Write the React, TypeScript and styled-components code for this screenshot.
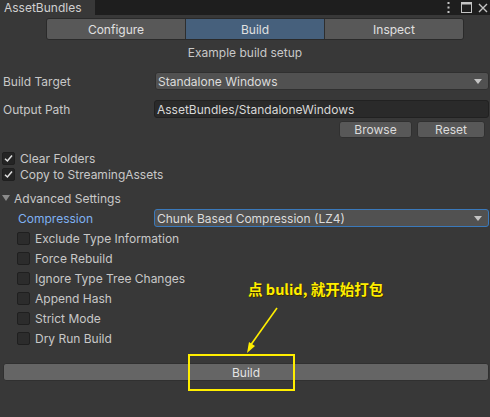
import React from "react";
import styled, { createGlobalStyle } from "styled-components";

const Global = createGlobalStyle`
  html, body { margin: 0; padding: 0; background: #383838; }
  body { font-family: Inter, "Noto Sans", sans-serif; }
  * { box-sizing: border-box; }
`;

const Window = styled.div`
  position: relative;
  width: 490px;
  height: 417px;
  background: #383838;
  color: #c8c8c8;
  font-size: 12px;
  overflow: hidden;
  display: flex;
  flex-direction: column;
`;

const Header = styled.div`
  height: 15px;
  background: #1e1e1e;
  display: flex;
  align-items: stretch;
`;

const Tab = styled.div`
  width: 95px;
  background: #383838;
  color: #d0d0d0;
  font-size: 12px;
  line-height: 15px;
  padding-left: 4px;
`;

const HeaderIcons = styled.div`
  margin-left: auto;
  display: flex;
  align-items: center;
  gap: 6px;
  padding-right: 2px;
`;

const Toolbar = styled.div`
  margin: 3px 0 0 46px;
  display: flex;
  width: 418px;
  height: 22px;
  border-radius: 3px;
  overflow: hidden;
  border: 1px solid #2a2a2a;
`;

const ToolButton = styled.div<{ $active?: boolean }>`
  flex: 1;
  background: ${(p) => (p.$active ? "#46607c" : "#585858")};
  color: #e0e0e0;
  display: flex;
  align-items: center;
  justify-content: center;
  font-size: 12px;
  & + & { border-left: 1px solid #2e2e2e; }
`;

const Subtitle = styled.div`
  height: 18px;
  margin-top: 4px;
  text-align: center;
  line-height: 18px;
`;

const FieldRow = styled.div<{ $mt: number }>`
  margin-top: ${(p) => p.$mt}px;
  height: 18px;
  display: flex;
  align-items: center;
`;

const Label = styled.div<{ $indent?: number; $blue?: boolean }>`
  width: 154px;
  padding-left: ${(p) => p.$indent ?? 3}px;
  color: ${(p) => (p.$blue ? "#7fb1f2" : "#c8c8c8")};
`;

const Dropdown = styled.div<{ $focus?: boolean }>`
  flex: 1;
  margin-right: 1px;
  height: 18px;
  background: #515151;
  border: 1px solid ${(p) => (p.$focus ? "#3a79bb" : "#303030")};
  border-radius: 3px;
  display: flex;
  align-items: center;
  padding: 0 6px 0 2px;
  color: #dcdcdc;
  margin-left: ${(p) => (p.$focus ? "0" : "1px")};
`;

const Caret = styled.span`
  margin-left: auto;
  width: 0;
  height: 0;
  border-left: 4px solid transparent;
  border-right: 4px solid transparent;
  border-top: 5px solid #c4c4c4;
`;

const TextField = styled.div`
  flex: 1;
  margin-right: 1px;
  height: 18px;
  background: #2a2a2a;
  border: 1px solid #212121;
  border-radius: 3px;
  display: flex;
  align-items: center;
  padding-left: 2px;
  color: #d8d8d8;
`;

const ButtonRow = styled.div`
  margin-top: 3px;
  height: 17px;
  display: flex;
  justify-content: flex-end;
  gap: 5px;
  padding-right: 5px;
`;

const SmallButton = styled.div<{ $w: number }>`
  width: ${(p) => p.$w}px;
  background: #585858;
  border: 1px solid #303030;
  border-radius: 3px;
  display: flex;
  align-items: center;
  justify-content: center;
  color: #dcdcdc;
`;

const CheckRow = styled.div<{ $mt?: number; $h: number; $indent: number }>`
  margin-top: ${(p) => p.$mt ?? 0}px;
  height: ${(p) => p.$h}px;
  display: flex;
  align-items: center;
  padding-left: ${(p) => p.$indent}px;
  gap: 5px;
`;

const Box = styled.div<{ $checked?: boolean }>`
  width: 13px;
  height: 13px;
  border-radius: 2px;
  background: ${(p) => (p.$checked ? "#242424" : "#2c2c2c")};
  border: 1px solid #1f1f1f;
  display: flex;
  align-items: center;
  justify-content: center;
`;

const Foldout = styled.div`
  margin-top: 7px;
  height: 18px;
  display: flex;
  align-items: center;
  padding-left: 2px;
  gap: 4px;
`;

const Triangle = styled.span`
  width: 0;
  height: 0;
  border-left: 4px solid transparent;
  border-right: 4px solid transparent;
  border-top: 6px solid #8a8a8a;
`;

const BigButton = styled.div`
  margin: 15px 1px 0 3px;
  height: 18px;
  background: #656565;
  border: 1px solid #303030;
  border-radius: 3px;
  display: flex;
  align-items: center;
  justify-content: center;
  color: #e4e4e4;
`;

const Note = styled.div`
  position: absolute;
  left: 248px;
  top: 278px;
  font-family: "Noto Sans CJK SC", "Noto Sans", sans-serif;
  font-weight: 700;
  font-size: 14.5px;
  color: #ffee00;
  text-shadow: 1px 1px 0 #3a2a00;
  white-space: nowrap;
`;

const Highlight = styled.div`
  position: absolute;
  left: 188px;
  top: 354px;
  width: 107px;
  height: 37px;
  border: 2px solid #ffee00;
`;

const ArrowSvg = styled.svg`
  position: absolute;
  left: 240px;
  top: 300px;
`;

const Check = () => (
  <svg width="9" height="9" viewBox="0 0 9 9">
    <path d="M1 4.8 L3.4 7 L8 1.6" fill="none" stroke="#e0e0e0" strokeWidth="1.5" />
  </svg>
);

const advanced = [
  "Exclude Type Information",
  "Force Rebuild",
  "Ignore Type Tree Changes",
  "Append Hash",
  "Strict Mode",
  "Dry Run Build",
];

export default function App() {
  return (
    <Window>
      <Global />
      <Header>
        <Tab>AssetBundles</Tab>
        <HeaderIcons>
          <svg width="3" height="11" viewBox="0 0 3 11">
            <rect x="0.5" y="0" width="2" height="2" fill="#c4c4c4" />
            <rect x="0.5" y="4.5" width="2" height="2" fill="#c4c4c4" />
            <rect x="0.5" y="9" width="2" height="2" fill="#c4c4c4" />
          </svg>
          <svg width="11" height="11" viewBox="0 0 11 11" style={{ marginLeft: 5 }}>
            <rect x="0.5" y="0.5" width="10" height="10" fill="none" stroke="#c4c4c4" />
            <rect x="0.5" y="0.5" width="10" height="2" fill="#c4c4c4" />
          </svg>
          <svg width="10" height="10" viewBox="0 0 10 10">
            <path d="M1 1 L9 9 M9 1 L1 9" stroke="#c4c4c4" strokeWidth="1.4" />
          </svg>
        </HeaderIcons>
      </Header>
      <Toolbar>
        <ToolButton>Configure</ToolButton>
        <ToolButton $active>Build</ToolButton>
        <ToolButton>Inspect</ToolButton>
      </Toolbar>
      <Subtitle>Example build setup</Subtitle>
      <FieldRow $mt={10}>
        <Label>Build Target</Label>
        <Dropdown>
          Standalone Windows
          <Caret />
        </Dropdown>
      </FieldRow>
      <FieldRow $mt={10}>
        <Label>Output Path</Label>
        <TextField>AssetBundles/StandaloneWindows</TextField>
      </FieldRow>
      <ButtonRow>
        <SmallButton $w={73}>Browse</SmallButton>
        <SmallButton $w={68}>Reset</SmallButton>
      </ButtonRow>
      <CheckRow $mt={12} $h={16} $indent={2}>
        <Box $checked>
          <Check />
        </Box>
        Clear Folders
      </CheckRow>
      <CheckRow $h={16} $indent={2}>
        <Box $checked>
          <Check />
        </Box>
        Copy to StreamingAssets
      </CheckRow>
      <Foldout>
        <Triangle />
        Advanced Settings
      </Foldout>
      <FieldRow $mt={2}>
        <Label $indent={18} $blue>
          Compression
        </Label>
        <Dropdown $focus>
          Chunk Based Compression (LZ4)
          <Caret />
        </Dropdown>
      </FieldRow>
      {advanced.map((t, i) => (
        <CheckRow key={t} $mt={i === 0 ? 1 : 0} $h={20} $indent={17}>
          <Box />
          {t}
        </CheckRow>
      ))}
      <BigButton>Build</BigButton>
      <Note>点 bulid, 就开始打包</Note>
      <ArrowSvg width="45" height="56" viewBox="0 0 45 56">
        <path d="M37 8 L10 46" stroke="#ffee00" strokeWidth="1.6" />
        <path d="M7 53 L9 42 L15 46 Z" fill="#ffee00" />
      </ArrowSvg>
      <Highlight />
    </Window>
  );
}
